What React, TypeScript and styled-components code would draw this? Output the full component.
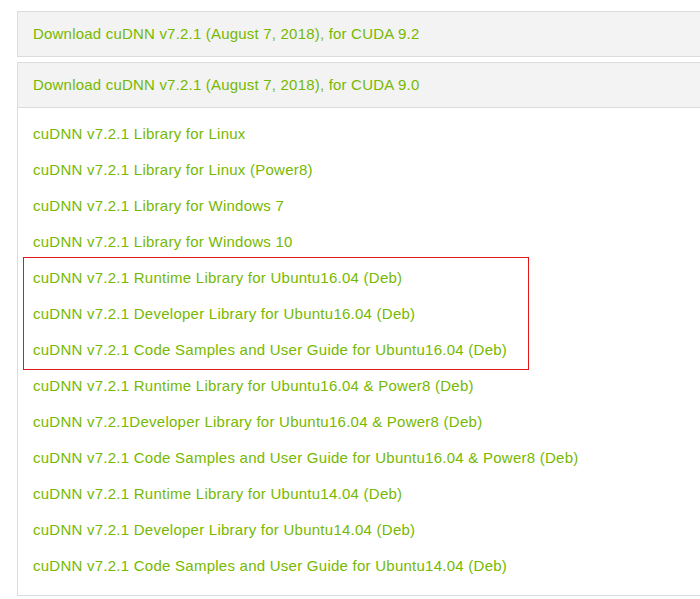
import styled, { createGlobalStyle, css } from "styled-components";

const GlobalStyle = createGlobalStyle`
  body {
    margin: 0;
    background: #fff;
    font-family: "Liberation Sans", Arial, sans-serif;
  }
`;

const Page = styled.div`
  padding: 11px 0 0 17px;
  width: 720px;
`;

const Panel = styled.div`
  margin-bottom: 5px;
`;

const Heading = styled.div`
  box-sizing: border-box;
  height: 46px;
  display: flex;
  align-items: center;
  padding: 0 0 2px 15px;
  background: #f3f3f3;
  border: 1px solid #dcdcdc;
  color: #76b900;
  font-size: 15px;
  letter-spacing: 0.2px;
`;

const Body = styled.div`
  border: 1px solid #dcdcdc;
  border-top: none;
  padding: 7px 0 12px 5px;
  display: flex;
  flex-direction: column;
`;

const Group = styled.div<{ $boxed?: boolean }>`
  width: 504px;
  --indent: 10px;
  ${(p) =>
    p.$boxed &&
    css`
      --indent: 9px;
      border: 1px solid #e4161b;
      padding: 1px 0 2px;
      margin: -2px 0 -3px;
    `}
`;

const Item = styled.a`
  display: flex;
  align-items: center;
  height: 36px;
  padding-left: var(--indent);
  color: #76b900;
  font-size: 15px;
  letter-spacing: 0.25px;
  text-decoration: none;
  white-space: nowrap;
`;

const before = [
  "cuDNN v7.2.1 Library for Linux",
  "cuDNN v7.2.1 Library for Linux (Power8)",
  "cuDNN v7.2.1 Library for Windows 7",
  "cuDNN v7.2.1 Library for Windows 10",
];

const highlighted = [
  "cuDNN v7.2.1 Runtime Library for Ubuntu16.04 (Deb)",
  "cuDNN v7.2.1 Developer Library for Ubuntu16.04 (Deb)",
  "cuDNN v7.2.1 Code Samples and User Guide for Ubuntu16.04 (Deb)",
];

const after = [
  "cuDNN v7.2.1 Runtime Library for Ubuntu16.04 & Power8 (Deb)",
  "cuDNN v7.2.1Developer Library for Ubuntu16.04 & Power8 (Deb)",
  "cuDNN v7.2.1 Code Samples and User Guide for Ubuntu16.04 & Power8 (Deb)",
  "cuDNN v7.2.1 Runtime Library for Ubuntu14.04 (Deb)",
  "cuDNN v7.2.1 Developer Library for Ubuntu14.04 (Deb)",
  "cuDNN v7.2.1 Code Samples and User Guide for Ubuntu14.04 (Deb)",
];

export default function App() {
  return (
    <>
      <GlobalStyle />
      <Page>
        <Panel>
          <Heading>Download cuDNN v7.2.1 (August 7, 2018), for CUDA 9.2</Heading>
        </Panel>
        <Panel>
          <Heading>Download cuDNN v7.2.1 (August 7, 2018), for CUDA 9.0</Heading>
          <Body>
            <Group>
              {before.map((t) => (
                <Item key={t}>{t}</Item>
              ))}
            </Group>
            <Group $boxed>
              {highlighted.map((t) => (
                <Item key={t}>{t}</Item>
              ))}
            </Group>
            <Group>
              {after.map((t) => (
                <Item key={t}>{t}</Item>
              ))}
            </Group>
          </Body>
        </Panel>
      </Page>
    </>
  );
}
